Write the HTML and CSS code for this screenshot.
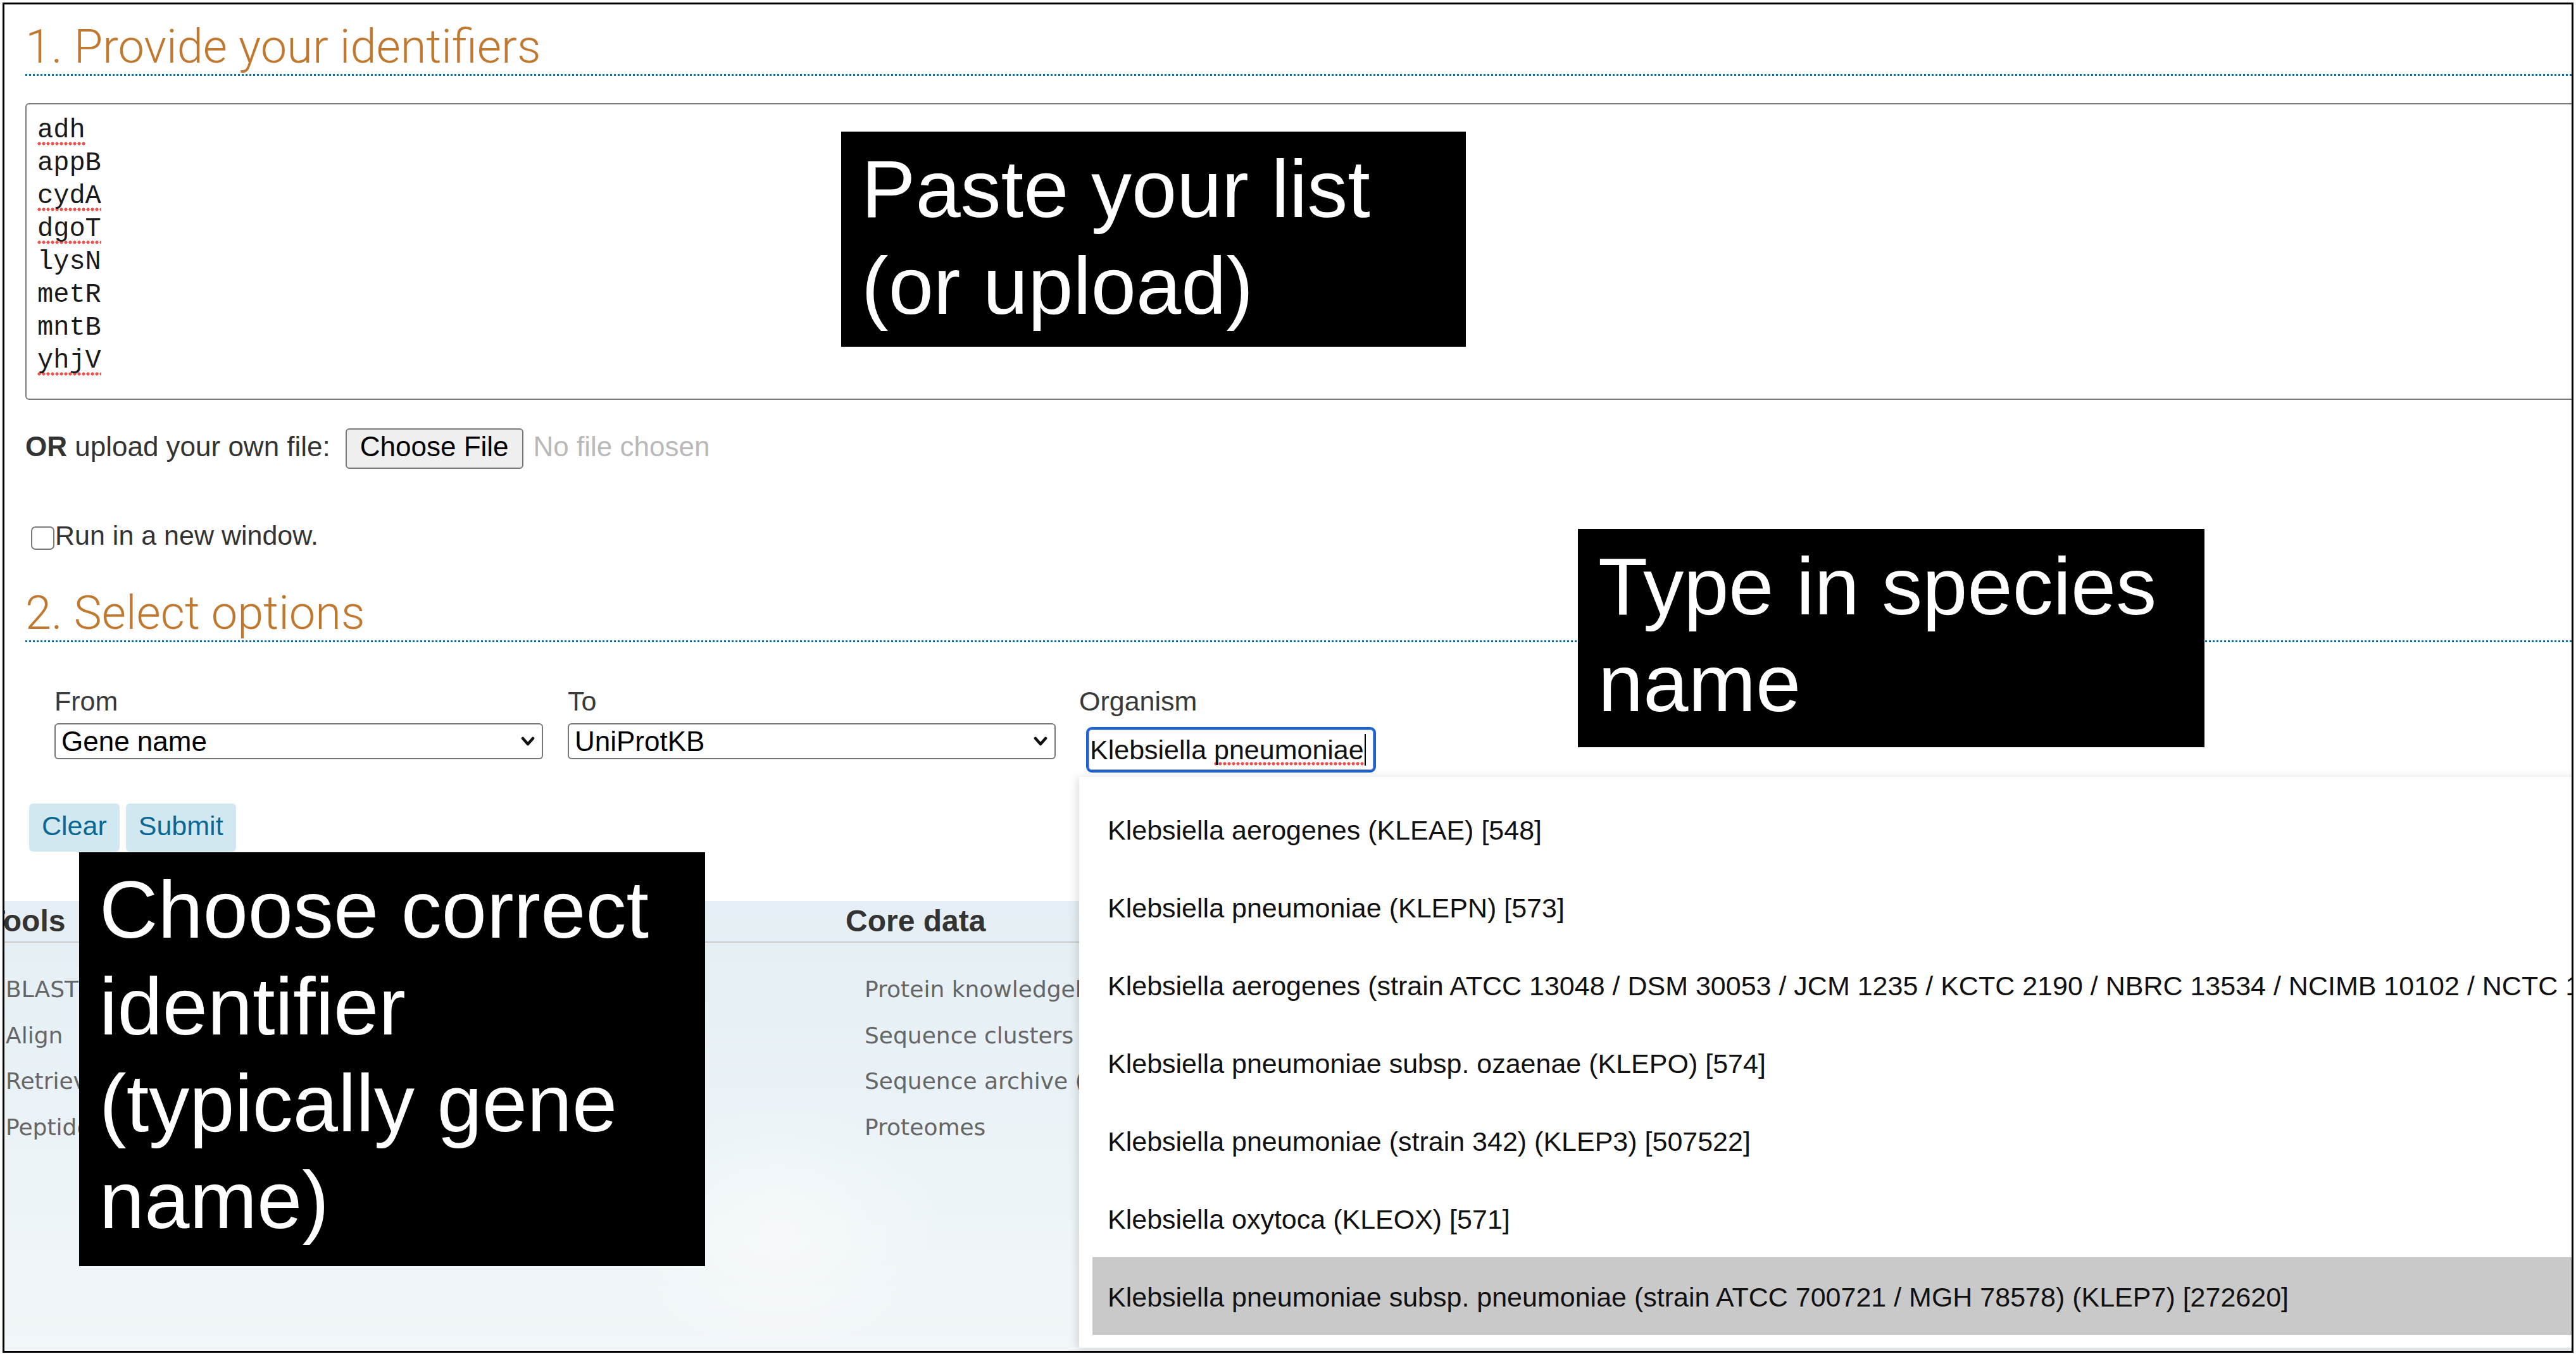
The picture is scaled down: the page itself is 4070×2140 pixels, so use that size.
FILE: index.html
```html
<!DOCTYPE html>
<html lang="en">
<head>
<meta charset="utf-8">
<title>Retrieve/ID mapping</title>
<link rel="stylesheet" href="styles.css">
</head>
<body>
<div class="frame">
  <main class="main">
    <h2 class="sec-title">1. Provide your identifiers</h2>
    <div class="idbox">
      <div><span class="sp">adh</span></div>
      <div>appB</div>
      <div><span class="sp">cydA</span></div>
      <div><span class="sp">dgoT</span></div>
      <div>lysN</div>
      <div>metR</div>
      <div>mntB</div>
      <div><span class="sp">yhjV</span></div>
    </div>
    <div class="upload-row">
      <span><b>OR</b> upload your own file:</span>
      <span class="file-btn">Choose File</span>
      <span class="no-file">No file chosen</span>
    </div>
    <div class="check-row"><span class="checkbox"></span><span>Run in a new window.</span></div>

    <h2 class="sec-title sec-two">2. Select options</h2>
    <div class="fields">
      <div class="field field-from">
        <div class="field-label">From</div>
        <div class="select"><span>Gene name</span><svg class="chev" viewBox="0 0 22 16" width="22" height="16"><path d="M3 3 L11 12 L19 3" fill="none" stroke="#111" stroke-width="4.5" stroke-linecap="round" stroke-linejoin="round"/></svg></div>
      </div>
      <div class="field field-to">
        <div class="field-label">To</div>
        <div class="select"><span>UniProtKB</span><svg class="chev" viewBox="0 0 22 16" width="22" height="16"><path d="M3 3 L11 12 L19 3" fill="none" stroke="#111" stroke-width="4.5" stroke-linecap="round" stroke-linejoin="round"/></svg></div>
      </div>
      <div class="field field-org">
        <div class="field-label">Organism</div>
        <div class="org-input">Klebsiella <span class="sp">pneumoniae</span><span class="caret"></span></div>
        <ul class="suggest">
          <li>Klebsiella aerogenes (KLEAE) [548]</li>
          <li>Klebsiella pneumoniae (KLEPN) [573]</li>
          <li>Klebsiella aerogenes (strain ATCC 13048 / DSM 30053 / JCM 1235 / KCTC 2190 / NBRC 13534 / NCIMB 10102 / NCTC 10006 / CDC 819-56) (KLEAK) [1028307]</li>
          <li>Klebsiella pneumoniae subsp. ozaenae (KLEPO) [574]</li>
          <li>Klebsiella pneumoniae (strain 342) (KLEP3) [507522]</li>
          <li>Klebsiella oxytoca (KLEOX) [571]</li>
          <li class="active">Klebsiella pneumoniae subsp. pneumoniae (strain ATCC 700721 / MGH 78578) (KLEP7) [272620]</li>
        </ul>
      </div>
    </div>
    <div class="actions">
      <span class="btn">Clear</span>
      <span class="btn">Submit</span>
    </div>
  </main>

  <footer class="site-footer">
    <div class="fcol">
      <h3>Tools</h3>
      <ul>
        <li>BLAST</li>
        <li>Align</li>
        <li>Retrieve/ID mapping</li>
        <li>Peptide search</li>
      </ul>
    </div>
    <div class="fcol">
      <h3>Core data</h3>
      <ul>
        <li>Protein knowledgebase (UniProtKB)</li>
        <li>Sequence clusters (UniRef)</li>
        <li>Sequence archive (UniParc)</li>
        <li>Proteomes</li>
      </ul>
    </div>
    <div class="fcol">
      <h3>Supporting data</h3>
      <ul>
        <li>Literature citations</li>
        <li>Taxonomy</li>
        <li>Keywords</li>
        <li>Subcellular locations</li>
      </ul>
    </div>
  </footer>

  <div class="note note-paste">Paste your list<br>(or upload)</div>
  <div class="note note-species">Type in species<br>name</div>
  <div class="note note-choose">Choose correct<br>identifier<br>(typically gene<br>name)</div>
</div>
</body>
</html>
```

FILE: styles.css
```css
html, body {
  margin: 0;
  padding: 0;
  background: #fff;
}

.frame {
  position: relative;
  box-sizing: border-box;
  width: 4062px;
  height: 2134px;
  margin: 4px 0 0 4px;
  border: 3px solid #000;
  overflow: hidden;
  display: flex;
  flex-direction: column;
  font-family: "Liberation Sans", Arial, sans-serif;
  color: #333;
}

.main {
  padding: 27px 0 0 33px;
}

.sec-title {
  margin: 0;
  font-family: Roboto, "Liberation Sans", sans-serif;
  font-weight: 300;
  font-size: 74px;
  line-height: 80px;
  color: #c0782e;
  padding-bottom: 3px;
  border-bottom: 3px dotted #17699a;
}

.sec-two {
  margin-top: 58px;
}

.idbox {
  margin-top: 43px;
  height: 469px;
  box-sizing: border-box;
  border: 2px solid #7b7b7b;
  border-right: none;
  border-radius: 6px 0 0 6px;
  padding: 15px 0 0 17px;
  font-family: "Liberation Mono", "Courier New", monospace;
  font-size: 42px;
  line-height: 52px;
  color: #1a1a1a;
}

.sp {
  background-image: radial-gradient(circle at 3px 3px, #f0524d 2.3px, transparent 2.9px);
  background-repeat: repeat-x;
  background-size: 7px 6px;
  background-position: left bottom;
}

.upload-row {
  margin-top: 45px;
  display: flex;
  align-items: baseline;
  font-size: 44px;
  line-height: 49px;
  color: #333;
}

.file-btn {
  margin-left: 24px;
  height: 64px;
  box-sizing: border-box;
  padding: 7px 21px 0;
  line-height: 40px;
  border: 2px solid #767676;
  border-radius: 6px;
  background: #efefef;
  color: #000;
}

.no-file {
  margin-left: 16px;
  color: #b9b9b9;
}

.check-row {
  margin-top: 81px;
  display: flex;
  align-items: flex-start;
  font-size: 43px;
  line-height: 49px;
  color: #333;
}

.checkbox {
  flex: none;
  width: 37px;
  height: 37px;
  box-sizing: border-box;
  margin: 10px 1px 0 9px;
  border: 2px solid #7a7a7a;
  border-radius: 7px;
  background: #fff;
}

.fields {
  margin-top: 69px;
  padding-left: 46px;
  display: flex;
  align-items: flex-start;
  font-size: 43px;
  line-height: 49px;
}

.field-label {
  color: #3a3a3a;
}

.field-from {
  width: 772px;
}

.field-to {
  width: 771px;
  margin-left: 39px;
}

.field-org {
  position: relative;
  margin-left: 37px;
}

.select {
  margin-top: 10px;
  height: 57px;
  box-sizing: border-box;
  border: 2px solid #767676;
  border-radius: 6px;
  padding: 0 11px 0 9px;
  display: flex;
  align-items: center;
  justify-content: space-between;
  background: #fff;
  color: #000;
  font-size: 44px;
}

.chev {
  display: block;
}

.org-input {
  margin: 16px 0 0 11px;
  width: 458px;
  height: 72px;
  box-sizing: border-box;
  border: 4px solid #1b63d4;
  border-radius: 9px;
  box-shadow: inset 0 0 0 1px #9a9a9a;
  padding: 0 0 0 2px;
  display: flex;
  align-items: center;
  white-space: pre;
  color: #111;
  overflow: hidden;
}

.caret {
  display: inline-block;
  width: 2px;
  height: 50px;
  margin-left: 1px;
  background: #000;
}

.suggest {
  position: absolute;
  left: 0;
  top: calc(100% + 7px);
  z-index: 2;
  width: 2500px;
  margin: 0;
  padding: 21px 0 20px 21px;
  list-style: none;
  background: #fff;
  box-shadow: -2px 2px 14px rgba(0, 0, 0, 0.16);
  font-size: 43px;
  color: #111;
}

.suggest li {
  height: 123px;
  box-sizing: border-box;
  padding: 3px 0 0 24px;
  line-height: 120px;
  white-space: nowrap;
}

.suggest li.active {
  background: #c9c9c9;
}

.actions {
  margin-top: 49px;
  padding-left: 6px;
  display: flex;
  gap: 10px;
}

.btn {
  height: 76px;
  box-sizing: border-box;
  padding: 11px 20px 0;
  font-size: 43px;
  line-height: 49px;
  background: #d2e8f0;
  color: #0b6895;
  border-radius: 6px;
}

.site-footer {
  flex: 1;
  margin: 78px 0 0 -28px;
  padding-top: 4px;
  display: flex;
  background:
    radial-gradient(ellipse 420px 260px at 760px 340px, rgba(255,255,255,0.55), transparent 70%),
    radial-gradient(ellipse 380px 300px at 1250px 520px, rgba(255,255,255,0.45), transparent 70%),
    linear-gradient(180deg, #e4eef4 0%, #ebf3f7 55%, #f2f6f9 100%);
}

.fcol {
  flex: none;
  width: 1357px;
}

.fcol h3 {
  margin: 0;
  font-family: "Liberation Sans", Arial, sans-serif;
  font-weight: bold;
  font-size: 48px;
  line-height: 56px;
  color: #333;
  padding-bottom: 4px;
  border-bottom: 2px solid #c9c9c9;
}

.fcol ul {
  list-style: none;
  margin: 38px 0 0;
  padding: 0 0 0 30px;
  font-family: "DejaVu Sans", Verdana, sans-serif;
  font-size: 36px;
  line-height: 72.5px;
  color: #666;
  white-space: nowrap;
}

.note {
  position: absolute;
  z-index: 3;
  box-sizing: border-box;
  padding: 14px 0 0 32px;
  background: #000;
  color: #fff;
  font-family: "Liberation Sans", Arial, sans-serif;
  font-size: 128px;
  line-height: 153px;
  white-space: nowrap;
}

.note-paste {
  left: 1322px;
  top: 201px;
  width: 987px;
  height: 340px;
}

.note-species {
  left: 2486px;
  top: 829px;
  width: 990px;
  height: 345px;
}

.note-choose {
  left: 118px;
  top: 1340px;
  width: 989px;
  height: 654px;
}
```
